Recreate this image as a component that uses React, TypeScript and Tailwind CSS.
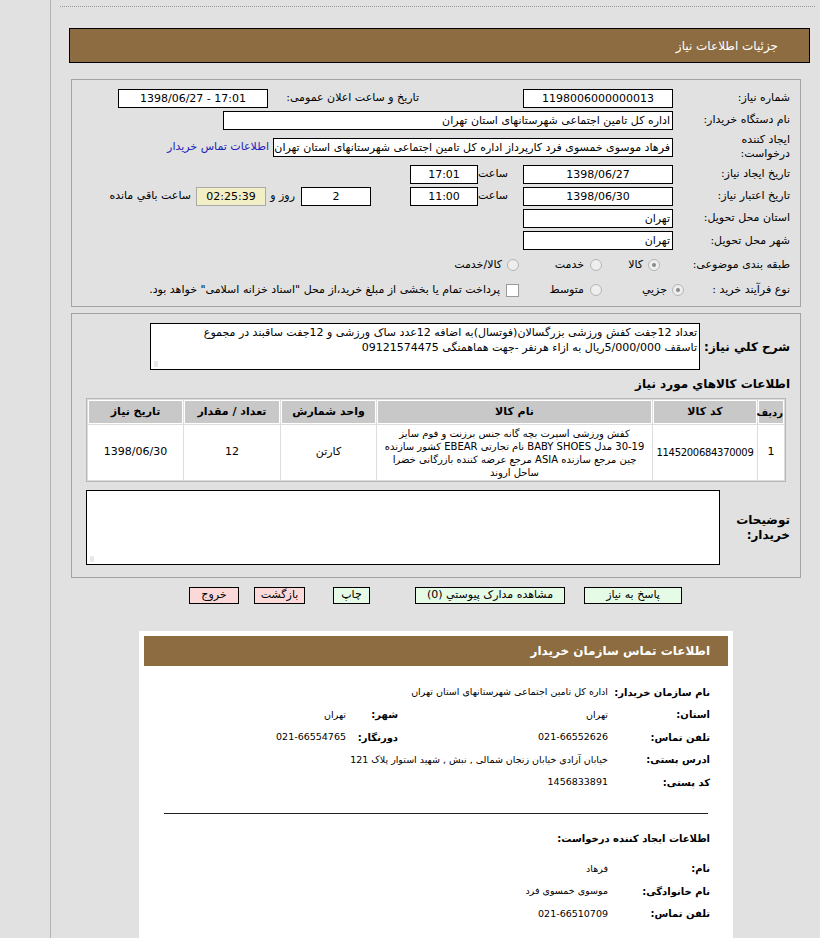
const lbl = "w-[127px] pr-[10px] shrink-0 text-[11px] leading-[14px]"
const box = "h-[19px] border border-black bg-white text-[11px] leading-[17px] px-[2px] overflow-hidden whitespace-nowrap shrink-0"

function Radio({ on }: { on?: boolean }) {
    return (
        <span className="w-[12px] h-[12px] rounded-full border border-[#b5b5b5] bg-[#eeeeee] flex items-center justify-center shrink-0">
            {on && <span className="w-[4px] h-[4px] rounded-full bg-[#8a8a8a]" />}
        </span>
    )
}

function Grip() {
    return (
        <svg width="8" height="8" className="absolute left-[3px] bottom-[2px]" viewBox="0 0 8 8">
            <circle cx="1" cy="7" r="0.6" fill="#999" />
            <circle cx="3" cy="7" r="0.6" fill="#999" />
            <circle cx="1" cy="5" r="0.6" fill="#999" />
            <circle cx="3" cy="5" r="0.6" fill="#999" />
            <circle cx="1" cy="3" r="0.6" fill="#999" />
            <circle cx="3" cy="3" r="0.6" fill="#999" />
        </svg>
    )
}

function CardRow({ label, value, label2, value2 }: { label: string, value: string, label2?: string, value2?: string }) {
    return (
        <div className="flex items-center h-[22.5px] whitespace-nowrap">
            <div className="w-[102px] shrink-0 text-[10px] font-bold">{label}</div>
            <div className="w-[210px] shrink-0 text-[9.5px]">{value}</div>
            {label2 && <div className="w-[52px] shrink-0 text-[10px] font-bold">{label2}</div>}
            {value2 && <div className="text-[9.5px]">{value2}</div>}
        </div>
    )
}

export default function App() {
    return (
        <div className="min-h-[938px] bg-[#e1e1e1] flex font-['DejaVu_Sans',sans-serif] text-black">
            <div className="w-[50px] shrink-0" />
            <div className="w-[770px] border-l border-[#b4b4b4] min-h-[938px]" dir="rtl">
                <div className="ml-[9px] mr-[5px] mt-[6px] border-t border-dotted border-[#999]" />

                {/* header */}
                <div className="ml-[18px] mr-[10px] mt-[21px] h-[35px] bg-[#8c6c40] border border-black flex items-center pr-[31px] text-white text-[12px]">
                    جزئیات اطلاعات نیاز
                </div>

                {/* main form */}
                <div className="ml-[20px] mr-[19px] mt-[16px] border border-[#a3a3a3] pt-[7px] pb-[4px]">
                    <div className="flex items-center h-[22px]">
                        <div className={lbl}>شماره نیاز:</div>
                        <div className={`${box} w-[150px] text-center`}>1198006000000013</div>
                        <div className="w-[255px] pr-[104px] text-[11px] shrink-0">تاریخ و ساعت اعلان عمومی:</div>
                        <div className={`${box} w-[150px] text-center`} dir="ltr">1398/06/27 - 17:01</div>
                    </div>
                    <div className="flex items-center h-[22px]">
                        <div className={lbl}>نام دستگاه خریدار:</div>
                        <div className={`${box} w-[450px]`}>اداره کل تامین اجتماعی شهرستانهای استان تهران</div>
                    </div>
                    <div className="flex items-center h-[32px]">
                        <div className={lbl}>ایجاد کننده<br />درخواست:</div>
                        <div className={`${box} w-[400px]`}>فرهاد موسوی خمسوی فرد کارپرداز اداره کل تامین اجتماعی شهرستانهای استان تهران</div>
                        <div className="mr-[4px] text-[11px] text-[#2222bb]">اطلاعات تماس خریدار</div>
                    </div>
                    <div className="flex items-center h-[22px]">
                        <div className={lbl}>تاریخ ایجاد نیاز:</div>
                        <div className={`${box} w-[150px] text-center`}>1398/06/27</div>
                        <div className="w-[45px] pr-[15px] text-[11px] shrink-0">ساعت</div>
                        <div className={`${box} w-[68px] text-center`}>17:01</div>
                    </div>
                    <div className="flex items-center h-[22px]">
                        <div className={lbl}>تاریخ اعتبار نیاز:</div>
                        <div className={`${box} w-[150px] text-center`}>1398/06/30</div>
                        <div className="w-[45px] pr-[15px] text-[11px] shrink-0">ساعت</div>
                        <div className={`${box} w-[68px] text-center`}>11:00</div>
                        <div className={`${box} w-[70px] text-center mr-[39px]`}>2</div>
                        <div className="w-[35px] pr-[6px] text-[11px] shrink-0">روز و</div>
                        <div className="h-[19px] w-[70px] border border-[#aaa] bg-[#f2eec6] text-[11px] leading-[17px] text-center shrink-0">02:25:39</div>
                        <div className="pr-[5px] text-[11px] whitespace-nowrap">ساعت باقي مانده</div>
                    </div>
                    <div className="flex items-center h-[22px]">
                        <div className={lbl}>استان محل تحویل:</div>
                        <div className={`${box} w-[150px]`}>تهران</div>
                    </div>
                    <div className="flex items-center h-[23px]">
                        <div className={lbl}>شهر محل تحویل:</div>
                        <div className={`${box} w-[150px]`}>تهران</div>
                    </div>
                    <div className="flex items-center h-[26px] text-[11px]">
                        <div className={lbl}>طبقه بندی موضوعی:</div>
                        <div className="w-[67px] pr-[13px] flex items-center gap-[5px] shrink-0"><Radio on /><span>کالا</span></div>
                        <div className="w-[81px] pr-[4px] flex items-center gap-[6px] shrink-0"><Radio /><span>خدمت</span></div>
                        <div className="pr-[6px] flex items-center gap-[5px] shrink-0"><Radio /><span>کالا/خدمت</span></div>
                    </div>
                    <div className="flex items-center h-[24px] text-[11px]">
                        <div className="w-[110px] pr-[10px] shrink-0">نوع فرآیند خرید :</div>
                        <div className="w-[84px] pr-[6px] flex items-center gap-[5px] shrink-0"><Radio on /><span>جزیي</span></div>
                        <div className="w-[86px] pr-[4px] flex items-center gap-[6px] shrink-0"><Radio /><span>متوسط</span></div>
                        <div className="pr-[1px] flex items-center gap-[6px] whitespace-nowrap">
                            <span className="w-[13px] h-[13px] border border-[#9a9a9a] bg-white shrink-0" />
                            <span>پرداخت تمام یا بخشی از مبلغ خرید،از محل "اسناد خزانه اسلامی" خواهد بود.</span>
                        </div>
                    </div>
                </div>

                {/* description + items */}
                <div className="ml-[20px] mr-[19px] mt-[6px] border border-[#a3a3a3] pt-[9px] pb-[12px]">
                    <div className="flex items-center">
                        <div className="w-[100px] pr-[10px] shrink-0 text-[12px] font-bold">شرح كلي نياز:</div>
                        <div className="relative w-[550px] h-[47px] border border-black bg-white px-[2px] pt-[1px] text-[11px] leading-[15px] overflow-hidden whitespace-nowrap">
                            تعداد 12جفت کفش ورزشی بزرگسالان(فوتسال)به اضافه 12عدد ساک ورزشی و 12جفت ساقبند در مجموع<br />
                            تاسقف 5/000/000ریال به ازاء هرنفر -جهت هماهمنگی 09121574475
                            <Grip />
                        </div>
                    </div>
                    <div className="mt-[6px] h-[16px] pr-[10px] text-[12px] font-bold leading-[16px]">اطلاعات كالاهاي مورد نياز</div>
                    <div className="mt-[6px] mr-[14px] ml-[14px]">
                        <table className="w-[700px] table-fixed border-separate border-spacing-[1px] bg-[#dedede] border border-[#b5b5b5] text-[11px]">
                            <colgroup>
                                <col className="w-[26px]" />
                                <col className="w-[104px]" />
                                <col className="w-[275px]" />
                                <col className="w-[95px]" />
                                <col className="w-[96px]" />
                                <col className="w-[95px]" />
                            </colgroup>
                            <thead>
                                <tr className="h-[24px] bg-[#c8c8c8]">
                                    <th className="font-bold border border-white text-[10px] px-0 whitespace-nowrap">ردیف</th>
                                    <th className="font-bold border border-white">کد کالا</th>
                                    <th className="font-bold border border-white">نام کالا</th>
                                    <th className="font-bold border border-white">واحد شمارش</th>
                                    <th className="font-bold border border-white">تعداد / مقدار</th>
                                    <th className="font-bold border border-white">تاریخ نیاز</th>
                                </tr>
                            </thead>
                            <tbody>
                                <tr className="h-[55px] bg-white text-center">
                                    <td>1</td>
                                    <td className="text-[10px] tracking-[-0.3px]">1145200684370009</td>
                                    <td className="text-[10px] leading-[13px] px-[2px]">
                                        کفش ورزشی اسپرت بچه گانه جنس برزنت و فوم سایز<br />
                                        30-19 مدل BABY SHOES نام تجارتی EBEAR کشور سازنده<br />
                                        چین مرجع سازنده ASIA مرجع عرضه کننده بازرگانی خضرا<br />
                                        ساحل اروند
                                    </td>
                                    <td>کارتن</td>
                                    <td>12</td>
                                    <td>1398/06/30</td>
                                </tr>
                            </tbody>
                        </table>
                    </div>
                    <div className="mt-[8px] flex items-center">
                        <div className="w-[80px] pr-[10px] shrink-0 text-[12px] font-bold leading-[15px]">توضیحات<br />خریدار:</div>
                        <div className="relative w-[634px] h-[75px] border border-black bg-white">
                            <Grip />
                        </div>
                    </div>
                </div>

                {/* buttons */}
                <div className="mt-[9px] flex justify-center text-[11px]">
                    <div className="w-[98px] h-[17px] border border-black bg-[#e6fbe6] flex items-center justify-center">پاسخ به نیاز</div>
                    <div className="mr-[19px] w-[150px] h-[17px] border border-black bg-[#e6fbe6] flex items-center justify-center">مشاهده مدارک پیوستي (0)</div>
                    <div className="mr-[45px] w-[37px] h-[17px] border border-black bg-[#e6fbe6] flex items-center justify-center">چاپ</div>
                    <div className="mr-[28px] w-[51px] h-[17px] border border-black bg-[#fcd9d9] flex items-center justify-center">بازگشت</div>
                    <div className="mr-[15px] w-[50px] h-[17px] border border-black bg-[#fcd9d9] flex items-center justify-center">خروج</div>
                </div>

                {/* buyer contact card */}
                <div className="mt-[27px] mr-[87px] w-[594px] bg-white p-[5px] pb-[40px]">
                    <div className="h-[30px] bg-[#8c6c40] flex items-center pr-[18px] text-white text-[12px] font-bold">
                        اطلاعات تماس سازمان خریدار
                    </div>
                    <div className="pr-[18px] mt-[15px]">
                        <CardRow label="نام سازمان خریدار:" value="اداره کل تامین اجتماعی شهرستانهای استان تهران" />
                        <CardRow label="استان:" value="تهران" label2="شهر:" value2="تهران" />
                        <CardRow label="تلفن تماس:" value="021-66552626" label2="دورنگار:" value2="021-66554765" />
                        <div className="flex items-center h-[22.5px] whitespace-nowrap">
                            <div className="w-[102px] shrink-0 text-[10px] font-bold">ادرس پستی:</div>
                            <div className="text-[9.5px]">خیابان آزادی خیابان زنجان شمالی , نبش , شهید استوار پلاک 121</div>
                        </div>
                        <CardRow label="کد پستی:" value="1456833891" />
                    </div>
                    <div className="mt-[19px] mx-[20px] border-t border-[#222]" />
                    <div className="pr-[18px] mt-[14px] h-[22px] flex items-center text-[10px] font-bold">اطلاعات ایجاد کننده درخواست:</div>
                    <div className="pr-[18px] mt-[8px]">
                        <CardRow label="نام:" value="فرهاد" />
                        <CardRow label="نام خانوادگی:" value="موسوی خمسوی فرد" />
                        <CardRow label="تلفن تماس:" value="021-66510709" />
                    </div>
                </div>
            </div>
        </div>
    )
}
